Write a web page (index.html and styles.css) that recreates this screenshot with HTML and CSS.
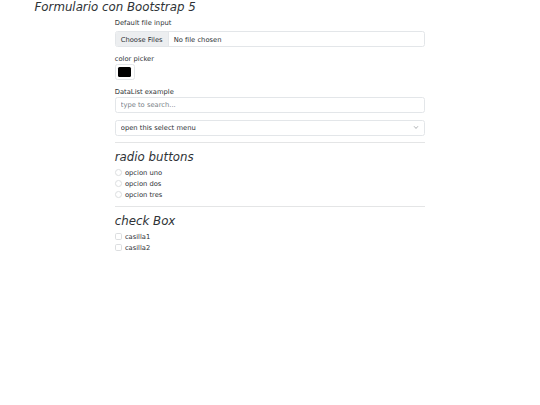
FILE: index.html
```html
<!DOCTYPE html>
<html lang="es">
<head>
<meta charset="utf-8">
<title>Formulario con Bootstrap 5</title>
<link rel="stylesheet" href="styles.css">
</head>
<body>
<div class="container">
  <h3 class="heading"><em>Formulario con Bootstrap 5</em></h3>
  <div class="form-col">
    <form>
      <div class="field">
        <label class="form-label" for="archivo">Default file input</label>
        <input class="form-control file-input" type="file" id="archivo" multiple>
      </div>
      <div class="field">
        <label class="plain-label" for="color">color picker</label>
        <input type="color" class="form-control-color" id="color" value="#000000" title="Choose your color">
      </div>
      <div class="field">
        <label class="plain-label" for="busqueda">DataList example</label>
        <input class="form-control" list="opciones" id="busqueda" placeholder="type to search...">
        <datalist id="opciones">
          <option value="uno"></option>
          <option value="dos"></option>
          <option value="tres"></option>
        </datalist>
      </div>
      <select class="form-select" aria-label="select">
        <option selected>open this select menu</option>
        <option value="1">uno</option>
        <option value="2">dos</option>
        <option value="3">tres</option>
      </select>
      <hr class="divider">
      <h3 class="heading"><em>radio buttons</em></h3>
      <div class="form-check">
        <input class="form-check-input radio" type="radio" name="opcion" id="r1">
        <label class="form-check-label" for="r1">opcion uno</label>
      </div>
      <div class="form-check">
        <input class="form-check-input radio" type="radio" name="opcion" id="r2">
        <label class="form-check-label" for="r2">opcion dos</label>
      </div>
      <div class="form-check">
        <input class="form-check-input radio" type="radio" name="opcion" id="r3">
        <label class="form-check-label" for="r3">opcion tres</label>
      </div>
      <hr class="divider">
      <h3 class="heading"><em>check Box</em></h3>
      <div class="form-check">
        <input class="form-check-input checkbox" type="checkbox" id="c1">
        <label class="form-check-label" for="c1">casilla1</label>
      </div>
      <div class="form-check">
        <input class="form-check-input checkbox" type="checkbox" id="c2">
        <label class="form-check-label" for="c2">casilla2</label>
      </div>
    </form>
  </div>
</div>
</body>
</html>
```
FILE: styles.css
```css
*,
*::before,
*::after {
  box-sizing: border-box;
}

body {
  margin: 0;
  font-family: "DejaVu Sans", "Liberation Sans", sans-serif;
  font-size: 6.75px;
  line-height: 1.5;
  color: #2e3236;
  background: #fff;
}

.container {
  width: 481px;
  margin: 0 auto;
  padding: 0 5.06px;
}

.heading {
  margin: 0 0 3.375px;
  font-size: 11.8125px;
  font-weight: normal;
  line-height: 1.2;
  color: #2e3236;
}

.heading em {
  font-style: italic;
}

.form-col {
  width: 310.5px;
  margin: 0 auto;
}

.field {
  margin-bottom: 6.75px;
}

.form-label {
  display: block;
  margin-bottom: 3.375px;
}

.plain-label {
  display: block;
}

.form-control {
  display: block;
  width: 100%;
  height: 16px;
  padding: 2px 5px;
  font-family: inherit;
  font-size: 6.75px;
  line-height: 1.5;
  color: #2e3236;
  background: #fff;
  border: 1px solid #e3e6e9;
  border-radius: 2.5px;
  outline: none;
}

.form-control::placeholder {
  color: #7a8188;
  opacity: 1;
}

.file-input {
  overflow: hidden;
}

.file-input::file-selector-button {
  height: 16px;
  padding: 2px 5px;
  margin: -2px 5px -2px -5px;
  font-family: inherit;
  font-size: 6.75px;
  line-height: 1.5;
  color: #2e3236;
  background: #eceef0;
  border: 0;
  border-right: 1px solid #e3e6e9;
  border-radius: 0;
}

.form-control-color {
  display: block;
  width: 20px;
  height: 16px;
  padding: 2px 2.5px;
  margin: 0;
  background: #fff;
  border: 1px solid #e3e6e9;
  border-radius: 2.5px;
  -webkit-appearance: none;
  appearance: none;
}

.form-control-color::-webkit-color-swatch-wrapper {
  padding: 0;
}

.form-control-color::-webkit-color-swatch {
  border: 0;
  border-radius: 1.5px;
}

.form-select {
  display: block;
  width: 100%;
  height: 16px;
  padding: 2px 15px 2px 5px;
  font-family: inherit;
  font-size: 6.75px;
  line-height: 1.5;
  color: #2e3236;
  background-color: #fff;
  background-image: url("data:image/svg+xml,%3csvg xmlns='http://www.w3.org/2000/svg' viewBox='0 0 16 16'%3e%3cpath fill='none' stroke='%23767b80' stroke-linecap='round' stroke-linejoin='round' stroke-width='2' d='m2 5 6 6 6-6'/%3e%3c/svg%3e");
  background-repeat: no-repeat;
  background-position: right 5px center;
  background-size: 6px 4.5px;
  border: 1px solid #e3e6e9;
  border-radius: 2.5px;
  -webkit-appearance: none;
  appearance: none;
  outline: none;
}

.divider {
  height: 0;
  margin: 6.75px 0;
  border: 0;
  border-top: 1px solid #e4e5e6;
}

.form-check {
  display: block;
  min-height: 10.125px;
  padding-left: 10.125px;
  margin-bottom: 0.84px;
}

.form-check-input {
  float: left;
  width: 6.75px;
  height: 6.75px;
  margin: 1.69px 0 0 -10.125px;
  background: #fff;
  border: 1px solid #dcdee0;
  -webkit-appearance: none;
  appearance: none;
}

.radio {
  border-radius: 50%;
}

.checkbox {
  border-radius: 1.7px;
}

.form-check-label {
  color: #2e3236;
}
```
